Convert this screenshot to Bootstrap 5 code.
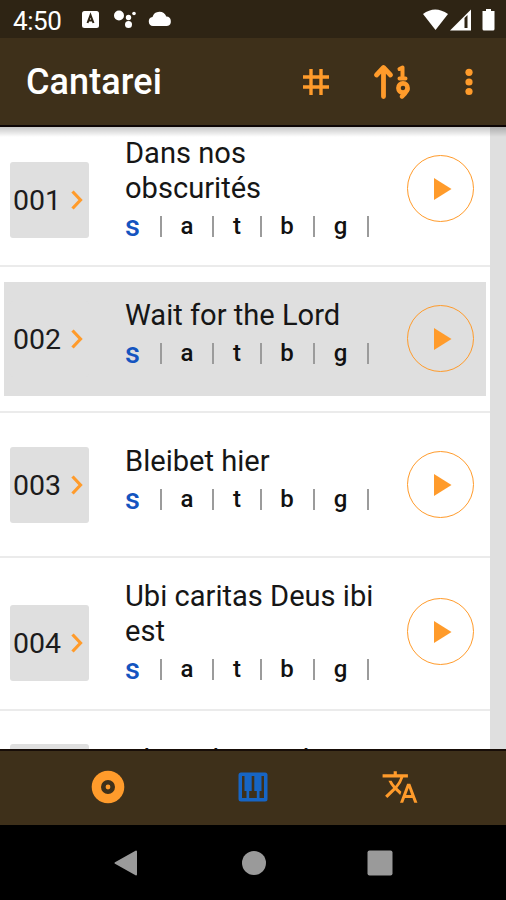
<!DOCTYPE html>
<html lang="en">
<head>
<meta charset="utf-8">
<meta name="viewport" content="width=device-width, initial-scale=1">
<title>Cantarei</title>
<link rel="stylesheet" href="https://cdn.jsdelivr.net/npm/bootstrap@5.3.0/dist/css/bootstrap.min.css">
<style>
  :root { --brown: #3e301a; --orange: #ff9b2b; --grey: #dfdfdf; }
  body { font-family: Roboto, "Liberation Sans", sans-serif; background: #000; }
  svg { display: block; flex: none; }
  .phone { width: 506px; height: 900px; overflow: hidden; }
  .status { height: 38px; background: #2e2414; color: #fff; padding: 0 9px 0 13px; }
  .clock { font-size: 26px; line-height: 38px; width: 57px; padding-top: 3px; letter-spacing: -.4px; }
  .status-left { gap: 12px; }
  .app-bar { height: 89px; background: var(--brown); color: var(--orange); padding: 1px 33px 0 26px; border-bottom: 2px solid #0c0505; }
  .app-title { font-size: 36px; font-weight: 500; color: #fff; line-height: 1; letter-spacing: .1px; }
  .act { background: none; border: 0; padding: 0; color: inherit; display: block; }
  .sort { margin: 0 55px 0 42px; }
  .songs { height: 622px; background: var(--grey); padding-right: 16px; position: relative; }
  .songs::before { content: ""; position: absolute; inset: 0 0 auto; height: 10px; background: linear-gradient(rgba(0,0,0,.22), transparent); z-index: 1; }
  .song { background: #fff; border-bottom: 2px solid #ebebeb; padding: 0 4px; }
  .song-in { width: 482px; padding-left: 6px; }
  .num { width: 79px; height: 76px; background: var(--grey); border-radius: 3px; font-size: 28.5px; color: #1c1c1c; padding: 0 6px 0 3px; }
  .num span { padding-top: 3px; }
  .info { width: 265px; margin-left: 36px; }
  .title { font-size: 29.1px; line-height: 35px; color: #161616; font-weight: 400; margin: 0 0 1px; }
  .parts { font-size: 24px; line-height: 38px; font-weight: 500; color: #111; }
  .parts span { display: block; flex: none; }
  .bar { width: 2px; height: 21px; background: #9b9b9b; }
  .p-s { width: 35px; font-size: 29px; font-weight: 500; color: #1454c0; }
  .p-a { width: 50px; text-align: center; } .p-t { width: 46px; text-align: center; }
  .p-b { width: 51px; text-align: center; padding-right: 1px; } .p-g { width: 52px; text-align: center; padding-right: 1px; }
  .play { width: 67px; height: 67px; border: 1.6px solid var(--orange); border-radius: 50%; margin-left: 17px; background: none; padding: 0; flex: none; }
  .r1 { height: 140px; } .r1 .num { margin-top: 35px; } .r1 .info { margin-top: 9px; } .r1 .play { margin-top: 28px; }
  .r2 { height: 146px; padding-top: 15px; } .r2 .song-in { height: 114px; background: var(--grey); }
  .r2 .num { margin-top: 19px; } .r2 .info { margin-top: 16px; } .r2 .play { margin-top: 23px; }
  .r3 { height: 145px; } .r3 .num { margin-top: 34px; } .r3 .info { margin-top: 31px; } .r3 .play { margin-top: 38px; }
  .r4 { height: 153px; } .r4 .num { margin-top: 47px; } .r4 .info { margin-top: 21px; } .r4 .play { margin-top: 40px; }
  .r5 { height: 145px; } .r5 .num { margin-top: 33px; } .r5 .info { margin-top: 32px; } .r5 .play { margin-top: 38px; }
  .tabs { height: 76px; background: var(--brown); border-top: 2px solid #170d08; color: var(--orange); position: relative; z-index: 2; padding: 0 35px 2px; }
  .tabs > button { width: 146px; display: flex; justify-content: center; }
  .sys { height: 75px; padding: 0 113px 0 112px; }
</style>
</head>
<body>
<svg width="0" height="0" class="position-absolute" aria-hidden="true">
  <symbol id="chev" viewBox="0 0 12 20"><path d="M1.500 1.500 9.500 10l-8 8.500" fill="none" stroke="#ff9b2b" stroke-width="3.200"/></symbol>
  <symbol id="tri" viewBox="0 0 18 22"><path d="M0 0v22l17.500-11z" fill="#ff9b2b"/></symbol>
</svg>
<div class="phone d-flex flex-column">
  <div class="status d-flex justify-content-between align-items-center flex-shrink-0">
    <div class="status-left d-flex align-items-center">
      <div class="clock">4:50</div>
      <svg width="18" height="20" viewBox="0 0 18 20"><rect x="0" y="2" width="17" height="17" rx="2.500" fill="#fff"/><path d="M5.500 14 8.500 6l3 8M6.500 11.500h4" fill="none" stroke="#2e2414" stroke-width="2"/></svg>
      <svg width="24" height="20" viewBox="0 0 24 20" fill="#fff"><circle cx="7" cy="6.500" r="5"/><circle cx="16.500" cy="8.500" r="2.700"/><circle cx="16.500" cy="15.500" r="3.500"/><circle cx="22" cy="4.500" r="1.800"/></svg>
      <svg width="24" height="16" viewBox="0 0 24 16"><path d="M5 15a4.600 4.600 0 0 1-.5-9.100A7.300 7.300 0 0 1 18.300 5.500 4.800 4.800 0 0 1 19 15z" fill="#fff"/></svg>
    </div>
    <svg width="74" height="24" viewBox="1 -1 74 24"><path d="M1 6Q13-3 26 6L13.500 22z" fill="#fff"/><path d="M28 22.500 49 1.500v21z" fill="#fff"/><path d="M42.500 10v10h3V7z" fill="#2e2414"/><path d="M64 1h5v2h3.500V21q0 1.500-1.500 1.500H62q-1.500 0-1.500-1.500V3H64z" fill="#fff"/></svg>
  </div>
  <nav class="app-bar d-flex justify-content-between align-items-center flex-shrink-0">
    <h1 class="app-title m-0">Cantarei</h1>
    <div class="d-flex align-items-center">
      <button class="act" aria-label="Number"><svg width="28" height="28" viewBox="0 0 28 28"><path d="M9 1v26M19 1v26M1 9h26M1 19h26" fill="none" stroke="currentColor" stroke-width="3.400"/></svg></button>
      <button class="act sort" aria-label="Sort"><svg width="38" height="36" viewBox="0 0 38 36" fill="none" stroke="currentColor" stroke-linecap="round" stroke-linejoin="round"><path d="M11.500 32.500V4M4.500 11 11.500 3.500 18.500 11" stroke-width="4.800"/><path d="M27.500 5 30.500 3.500V14.500M27.500 14.500h6" stroke-width="4"/><circle cx="31" cy="24" r="4.600" stroke-width="4.600"/><path d="M35.300 25.500Q33.500 29.500 30 32.500" stroke-width="4.400"/></svg></button>
      <button class="act" aria-label="More"><svg width="8" height="28" viewBox="0 0 8 28" fill="currentColor"><circle cx="4" cy="4.300" r="3.600"/><circle cx="4" cy="14" r="3.600"/><circle cx="4" cy="23.500" r="3.600"/></svg></button>
    </div>
  </nav>
  <main class="songs overflow-hidden flex-shrink-0" id="songs"></main>
  <nav class="tabs d-flex align-items-center justify-content-center flex-shrink-0">
    <button class="act" aria-label="Audio"><svg width="34" height="34" viewBox="0 0 34 34"><circle cx="17" cy="17" r="16.300" fill="currentColor"/><circle cx="17" cy="17" r="4.700" fill="none" stroke="#3e301a" stroke-width="4.600"/></svg></button>
    <button class="act" aria-label="Piano"><svg width="30" height="30" viewBox="0 0 30 30"><rect x=".5" y=".5" width="29" height="29" rx="2.500" fill="#1765c4"/><path d="M4 4h2.500v15H8.500v7H4zM13.700 4h2.600v15h2.500v7h-7.600v-7h2.500zM23.500 4H26v22h-4.500v-7h2z" fill="#3e301a"/></svg></button>
    <button class="act ps-1" aria-label="Language"><svg width="38" height="38" viewBox="0 0 24 24" fill="currentColor"><path d="m12.870 15.070-2.540-2.510.03-.03A17.520 17.520 0 0 0 14.070 6H17V4h-7V2H8v2H1v2h11.170C11.500 7.920 10.440 9.750 9 11.350 8.070 10.320 7.300 9.190 6.690 8h-2c.73 1.630 1.730 3.170 2.980 4.560l-5.090 5.020L4 19l5-5 3.110 3.110zM18.500 10h-2L12 22h2l1.120-3h4.750L21 22h2zm-2.620 7 1.620-4.330L19.120 17z"/></svg></button>
  </nav>
  <div class="sys d-flex align-items-center justify-content-between flex-shrink-0">
    <svg width="28" height="28" viewBox="0 0 28 28"><path d="M3.500 14 24 2.500v23z" fill="#9a9a9a" stroke="#9a9a9a" stroke-width="2" stroke-linejoin="round"/></svg>
    <svg width="26" height="26" viewBox="0 0 26 26"><circle cx="13" cy="13" r="12" fill="#9a9a9a"/></svg>
    <svg width="26" height="26" viewBox="0 0 26 26"><rect x=".5" y=".5" width="25" height="25" rx="2" fill="#9a9a9a"/></svg>
  </div>
</div>
<script>
  const songs = ["Dans nos<br>obscurités", "Wait for the Lord", "Bleibet hier", "Ubi caritas Deus ibi<br>est", "Bless the Lord"];
  const visibleDetails = 4;
  const parts = `<div class="parts d-flex align-items-center"><span class="p-s">s</span><i class="bar"></i><span class="p-a">a</span><i class="bar"></i><span class="p-t">t</span><i class="bar"></i><span class="p-b">b</span><i class="bar"></i><span class="p-g">g</span><i class="bar"></i></div>`;
  document.getElementById("songs").innerHTML = songs.map((title, i) => `
    <article class="song r${i + 1}">
      <div class="song-in d-flex align-items-start">
        <div class="num d-flex align-items-center justify-content-between flex-shrink-0">${i < visibleDetails ? `<span>00${i + 1}</span><svg width="12" height="20"><use href="#chev"/></svg>` : ""}</div>
        <div class="info flex-shrink-0">
          <h2 class="title text-nowrap">${title}</h2>
          ${i < visibleDetails ? parts : ""}
        </div>
        <button class="play d-flex align-items-center justify-content-center" aria-label="Play"><svg class="ms-1" width="18" height="22"><use href="#tri"/></svg></button>
      </div>
    </article>`).join("");
</script>
<script src="https://cdn.jsdelivr.net/npm/bootstrap@5.3.0/dist/js/bootstrap.bundle.min.js"></script>
</body>
</html>
